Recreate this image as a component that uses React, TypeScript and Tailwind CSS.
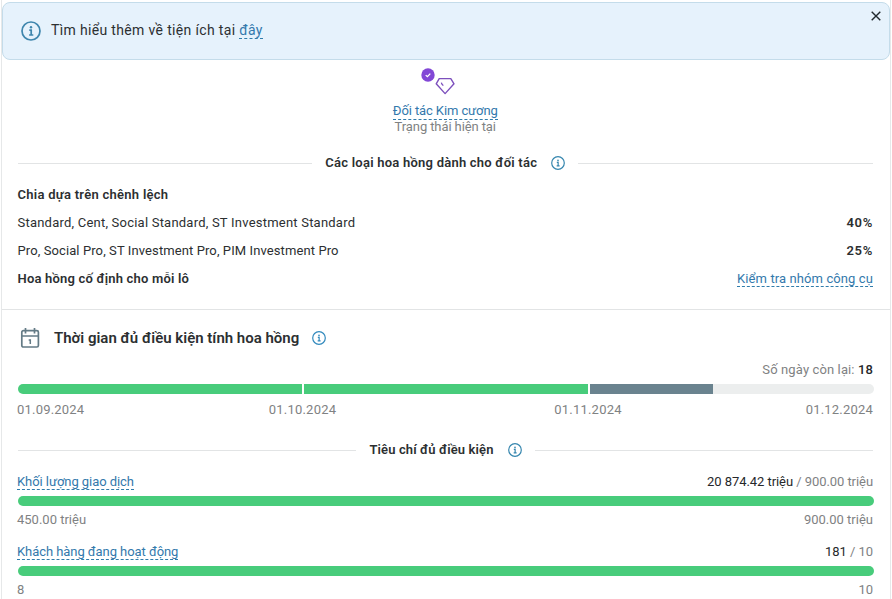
import { ReactNode } from 'react';

function InfoIcon({ size, className = '' }: { size: number; className?: string }) {
  return (
    <svg width={size} height={size} viewBox="0 0 20 20" fill="none" stroke="currentColor" className={`shrink-0 ${className}`}>
      <circle cx="10" cy="10" r="9" strokeWidth="1.7" />
      <path d="M8.3 9.2h1.9v4.6M8.1 14h4.2" strokeWidth="1.7" />
      <circle cx="10" cy="6.3" r="1.2" fill="currentColor" stroke="none" />
    </svg>
  );
}

function CalendarIcon() {
  return (
    <svg width="20" height="22" viewBox="0 0 20 22" fill="none" stroke="#647b86" strokeWidth="1.7" className="shrink-0">
      <rect x="1.8" y="3.6" width="16.6" height="16.4" rx="1.6" />
      <path d="M1.8 9h16.6M5.5 1v5.6M14.5 1v5.6" />
      <path d="M8.7 13h1.6v4" strokeWidth="1.5" />
    </svg>
  );
}

function DiamondIcon() {
  return (
    <svg width="50" height="30" viewBox="0 0 50 30" fill="none" className="mx-auto">
      <circle cx="8" cy="8" r="6.7" fill="#8247d6" />
      <path d="M5.7 8.1l1.7 1.6 2.9-3.1" stroke="#fff" strokeWidth="1.3" />
      <path
        d="M19.2 11.6h11.6l3.2 5.2-8.9 9.8-8.9-9.8z"
        stroke="#7d50bd"
        strokeWidth="1.4"
        strokeLinejoin="round"
      />
      <path d="M21.4 15.6l.4 1.4 1.5 1.6" stroke="#7d50bd" strokeWidth="1.3" />
    </svg>
  );
}

function Link({ children, className = '' }: { children: ReactNode; className?: string }) {
  return (
    <a href="#" className={`inline-block border-b border-dashed border-[#2f7cab] text-[#3379ac] ${className}`}>
      {children}
    </a>
  );
}

function Divider({ children, className = '' }: { children: ReactNode; className?: string }) {
  return (
    <div className={`flex h-5 items-center ${className}`}>
      <div className="h-px flex-1 bg-[#e2e4e5]" />
      <div className="flex items-center gap-[14px] px-[13px] font-semibold">
        {children}
        <InfoIcon size={14} className="text-[#3586ae]" />
      </div>
      <div className="h-px flex-1 bg-[#e2e4e5]" />
    </div>
  );
}

const criteria = [
  { name: 'Khối lượng giao dịch', value: '20 874.42 triệu', goal: '900.00 triệu', min: '450.00 triệu' },
  { name: 'Khách hàng đang hoạt động', value: '181', goal: '10', min: '8' },
];

export default function App() {
  return (
    <div className="h-[599px] w-[892px] overflow-hidden bg-white px-px font-['Roboto','Liberation_Sans',sans-serif] text-[13px] leading-5 text-[#2c2f31]">
      <div className="h-full border-x border-[#e6e8e9] pt-[2px]">
        <div className="flex h-[58px] items-start justify-between rounded-lg border border-[#c4dcea] bg-[#e6f2fc]">
          <div className="flex items-start pt-[18px] pl-[18px] text-[14px] tracking-[0.34px]">
            <InfoIcon size={20} className="text-[#3f86ad]" />
            <span className="-mt-px ml-[10px] whitespace-nowrap">
              Tìm hiểu thêm về tiện ích tại <Link className="leading-4">đây</Link>
            </span>
          </div>
          <svg width="10" height="10" viewBox="0 0 10 10" stroke="#20292e" strokeWidth="1.4" className="mt-2 mr-2">
            <path d="M.7.7l8.6 8.6M9.3.7L.7 9.3" />
          </svg>
        </div>

        <section className="pr-[17px] pl-[15.5px] pt-[7px]">
          <div className="flex h-[86px] flex-col items-center tracking-[-0.1px]">
            <DiamondIcon />
            <Link className="mt-[6px] h-[17px] leading-4">Đối tác Kim cương</Link>
            <span className="leading-[14px] text-[#7f8283]">Trạng thái hiện tại</span>
          </div>

          <Divider className="tracking-[0.23px]">Các loại hoa hồng dành cho đối tác</Divider>

          <div className="mt-3 flex flex-col gap-2">
            <div className="font-semibold tracking-[0.27px]">Chia dựa trên chênh lệch</div>
            <div className="flex justify-between">
              <span className="tracking-[0.22px]">Standard, Cent, Social Standard, ST Investment Standard</span>
              <span className="font-semibold tracking-[0.7px]">40%</span>
            </div>
            <div className="flex justify-between">
              <span className="tracking-[0.1px]">Pro, Social Pro, ST Investment Pro, PIM Investment Pro</span>
              <span className="font-semibold tracking-[0.7px]">25%</span>
            </div>
            <div className="flex justify-between">
              <span className="font-semibold tracking-[0.19px]">Hoa hồng cố định cho mỗi lô</span>
              <Link className="h-[18px] tracking-[0.1px]">Kiểm tra nhóm công cụ</Link>
            </div>
          </div>
        </section>

        <section className="mt-5 border-t border-[#e2e4e5] px-[16px] pt-[17px]">
          <div className="flex items-center pl-[2px]">
            <CalendarIcon />
            <h2 className="ml-[14px] text-[15px] font-semibold">Thời gian đủ điều kiện tính hoa hồng</h2>
            <InfoIcon size={14} className="ml-[13px] text-[#3189bd]" />
          </div>

          <div className="mt-[11px] pr-px text-right tracking-[0.12px] text-[#7f8283]">
            Số ngày còn lại: <span className="font-medium text-[#26282a]">18</span>
          </div>
          <div className="mt-1 flex h-[10px] gap-[2px] overflow-hidden rounded-[5px]">
            <div className="w-[284px] bg-[#48cc7b]" />
            <div className="w-[284px] bg-[#48cc7b]" />
            <div className="flex-1 bg-[#eceeee]">
              <div className="h-full w-[123px] bg-[#6a838f]" />
            </div>
          </div>
          {/* middle dates are centred under the gaps between months */}
          <div className="mt-[6px] -ml-px flex pr-px tracking-[0.2px] text-[#7f8283]">
            <span className="w-[143px]">01.09.2024</span>
            <span className="w-[285px] text-center">01.10.2024</span>
            <span className="w-[286px] text-center">01.11.2024</span>
            <span className="flex-1 text-right">01.12.2024</span>
          </div>

          <Divider className="mt-5 pr-px tracking-[0.12px]">Tiêu chí đủ điều kiện</Divider>

          {criteria.map((c) => (
            <div key={c.name} className="mt-3 h-[58px] tracking-[-0.06px]">
              <div className="-ml-px flex h-5 justify-between pr-px">
                <Link className="h-[18px]">{c.name}</Link>
                <span className="text-[#7f8283]">
                  <span className="text-[#26282a]">{c.value}</span> / {c.goal}
                </span>
              </div>
              <div className="mt-[4px] h-[10px] rounded-full bg-[#48cc7b]" />
              <div className="mt-1 -ml-px flex justify-between pr-px tracking-normal text-[#7f8283]">
                <span>{c.min}</span>
                <span>{c.goal}</span>
              </div>
            </div>
          ))}
        </section>
      </div>
    </div>
  );
}
